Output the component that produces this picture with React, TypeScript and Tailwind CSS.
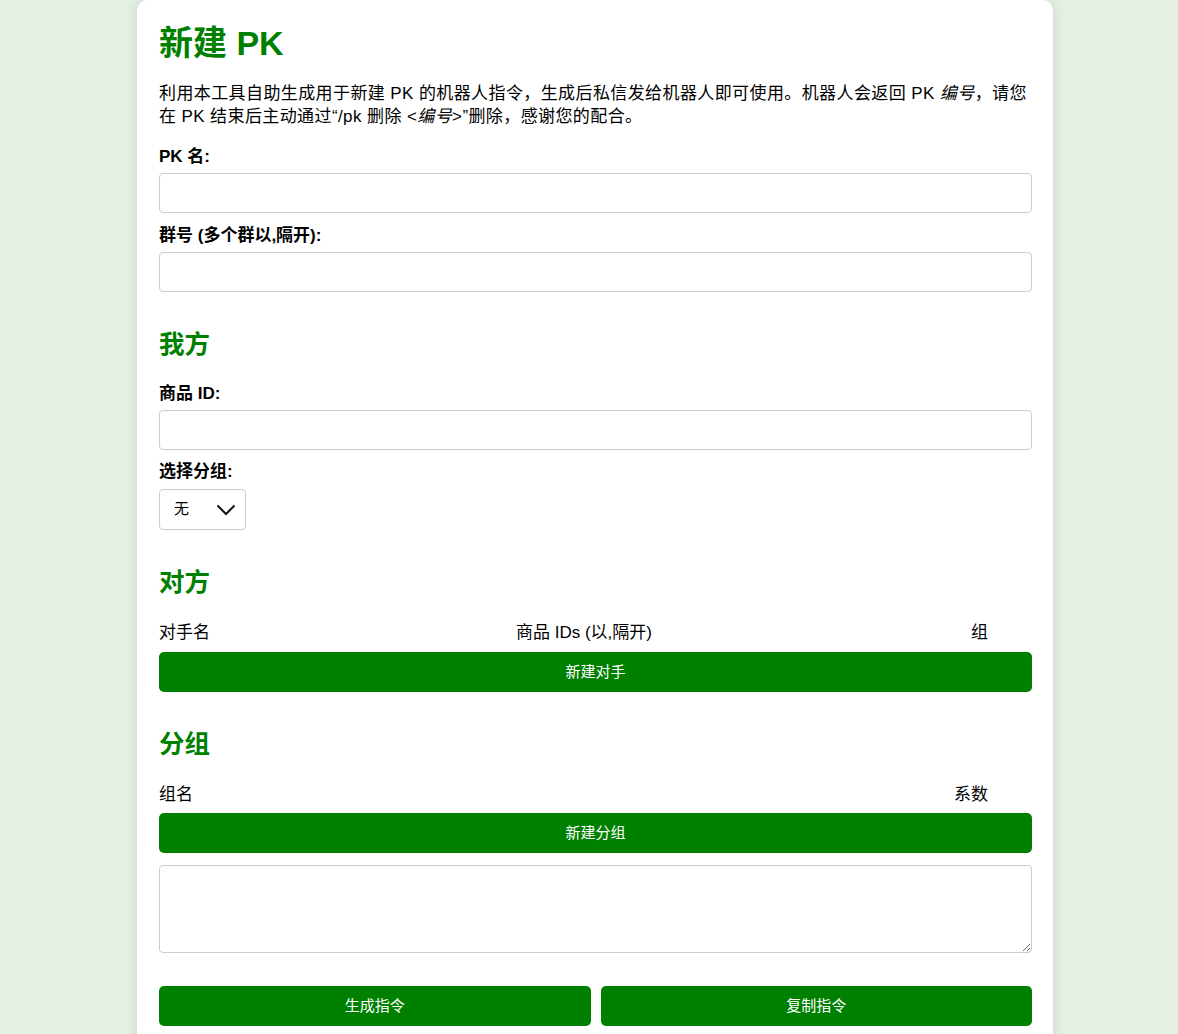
import React, { useState } from 'react';

const font = 'font-["Liberation_Sans","Noto_Sans_CJK_SC",sans-serif]';

const inputCls =
  'block w-full h-[40px] rounded-[4px] border border-[#cccccc] bg-white px-2 text-[17px] outline-none focus:border-[#008000]';

const btnCls =
  'block w-full h-[40px] rounded-[5px] bg-[#008000] text-white text-[15px] leading-[40px] hover:bg-[#006f00]';

const Label: React.FC<{ text: string; className?: string }> = ({ text, className = '' }) => (
  <label className={`block font-bold text-[17px] leading-[22px] mb-[5px] ${className}`}>{text}</label>
);

const SectionTitle: React.FC<{ text: string }> = ({ text }) => (
  <h2 className="mt-[37px] text-[25.5px] leading-[30px] font-bold text-[#008000]">{text}</h2>
);

export default function App() {
  const [pkName, setPkName] = useState('');
  const [groups, setGroups] = useState('');
  const [itemId, setItemId] = useState('');
  const [group, setGroup] = useState('none');
  const [output, setOutput] = useState('');

  return (
    <div className={`min-h-screen bg-[#e5f0e4] ${font} text-black overflow-hidden`}>
      <div className="ml-[137px] w-[916px] bg-white rounded-[10px] shadow-[0_0_12px_rgba(0,0,0,0.12)] pl-[22px] pr-[21px] pt-[23px] pb-8">
        <h1 className="text-[34px] leading-[40px] font-bold text-[#008000]">新建 PK</h1>
        <p className="mt-[19px] text-[17px] leading-[23px] tracking-[0.4px]">
          利用本工具自助生成用于新建 PK 的机器人指令，生成后私信发给机器人即可使用。机器人会返回 PK <i>编号</i>，请您在 PK 结束后主动通过“/pk 删除 &lt;<i>编号</i>&gt;”删除，感谢您的配合。
        </p>

        <Label text="PK 名:" className="mt-[18px]" />
        <input className={inputCls} value={pkName} onChange={e => setPkName(e.target.value)} />

        <Label text="群号 (多个群以,隔开):" className="mt-[12px]" />
        <input className={inputCls} value={groups} onChange={e => setGroups(e.target.value)} />

        <SectionTitle text="我方" />
        <Label text="商品 ID:" className="mt-[24px]" />
        <input className={inputCls} value={itemId} onChange={e => setItemId(e.target.value)} />

        <Label text="选择分组:" className="mt-[11px]" />
        <div className="relative mt-[6px] w-[87px]">
          <select
            value={group}
            onChange={e => setGroup(e.target.value)}
            className="block w-full h-[41px] appearance-none rounded-[4px] border border-[#cccccc] bg-white pl-[14px] text-[15px] outline-none"
          >
            <option value="none">无</option>
          </select>
          <svg
            className="pointer-events-none absolute right-[10px] top-[15px]"
            width="20"
            height="12"
            viewBox="0 0 20 12"
            fill="none"
            stroke="#111"
            strokeWidth="2"
          >
            <path d="M1.5 1.5 L10 10 L18.5 1.5" />
          </svg>
        </div>

        <SectionTitle text="对方" />
        <div className="mt-[25px] flex text-[17px] leading-[22px]">
          <span className="w-[357px]">对手名</span>
          <span className="w-[455px]">商品 IDs (以,隔开)</span>
          <span>组</span>
        </div>
        <button className={`${btnCls} mt-[8px]`}>新建对手</button>

        <SectionTitle text="分组" />
        <div className="mt-[25px] flex justify-between pr-[44px] text-[17px] leading-[22px]">
          <span>组名</span>
          <span>系数</span>
        </div>
        <button className={`${btnCls} mt-[7px]`}>新建分组</button>

        <textarea
          value={output}
          onChange={e => setOutput(e.target.value)}
          className="mt-[12px] block w-full h-[88px] rounded-[4px] border border-[#cccccc] p-2 text-[15px] outline-none"
        />

        <div className="mt-[33px] flex gap-[10px]">
          <button className={btnCls}>生成指令</button>
          <button className={btnCls}>复制指令</button>
        </div>
      </div>
    </div>
  );
}
